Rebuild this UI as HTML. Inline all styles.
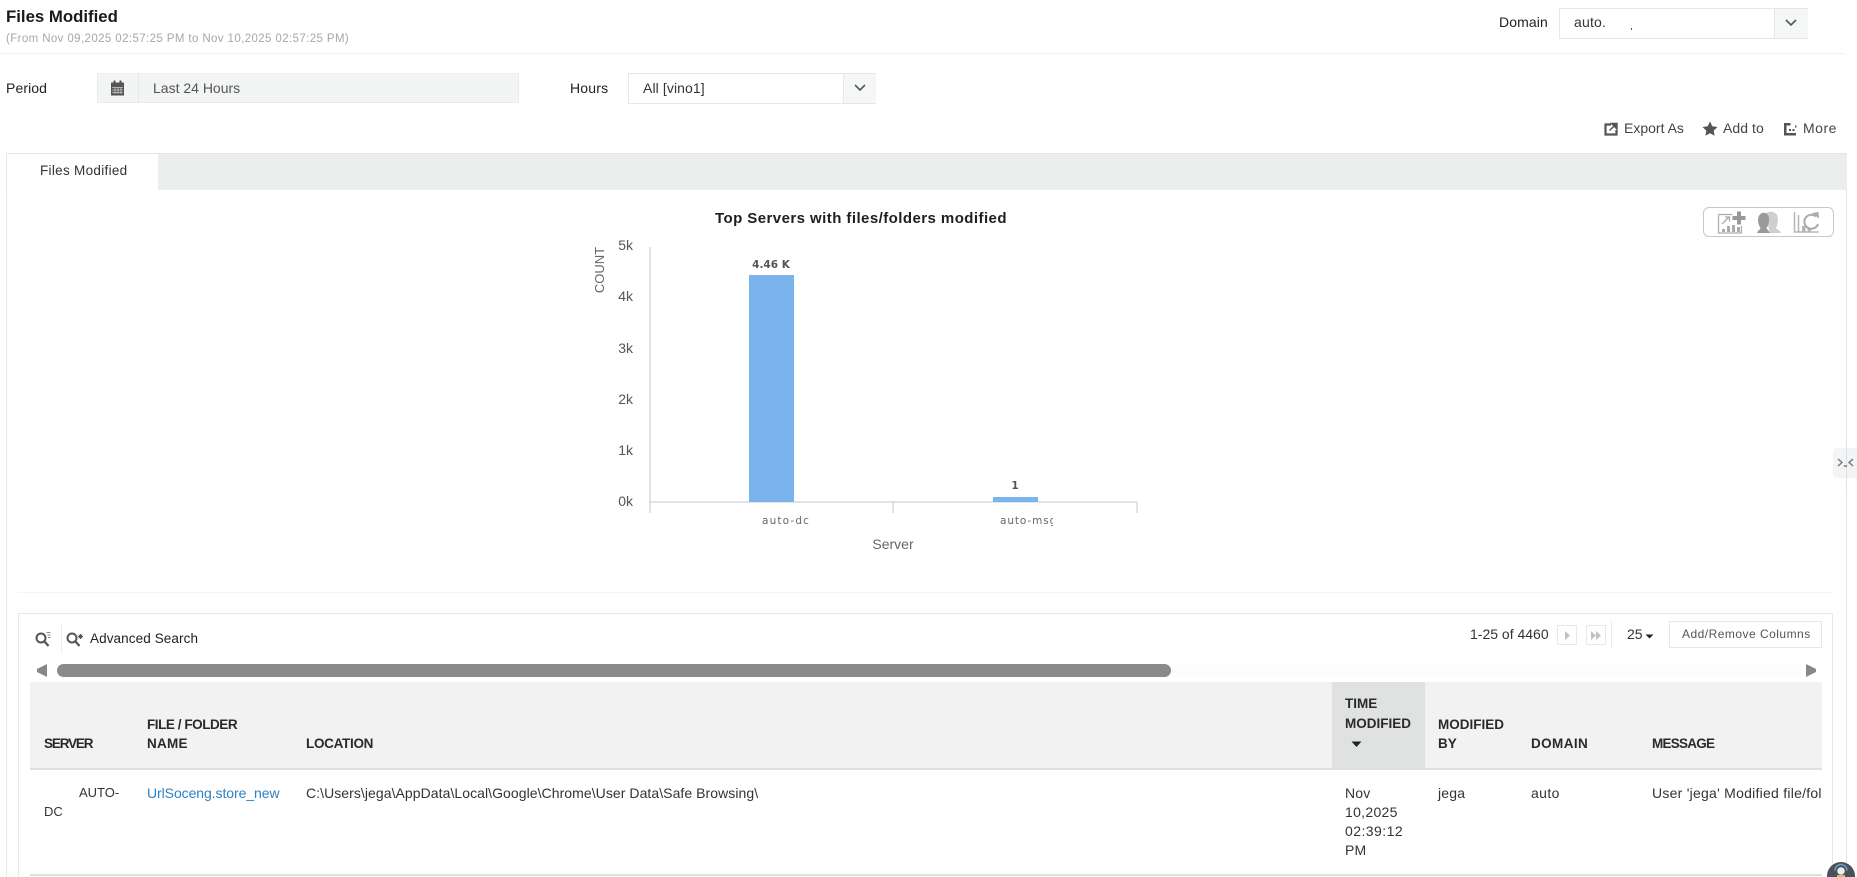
<!DOCTYPE html>
<html lang="en"><head><meta charset="utf-8"><title>Files Modified</title>
<style>
html,body{margin:0;padding:0;background:#fff}
body{width:1857px;height:877px;overflow:hidden;position:relative;font-family:"Liberation Sans",sans-serif;font-size:14px;color:#222}
.a{position:absolute}
.t{position:absolute;white-space:nowrap;line-height:20px;height:20px}
.h{font-weight:bold;font-size:13.5px;color:#2a2a2a;letter-spacing:0}
svg{position:absolute;display:block}
</style></head><body>

<div class="t" style="left:6px;top:7px;font-size:16.8px;font-weight:bold;color:#1a1a1a">Files Modified</div>
<div class="t" style="left:6px;top:29px;font-size:11.5px;color:#a3a9a9;letter-spacing:.39px">(From Nov 09,2025 02:57:25 PM to Nov 10,2025 02:57:25 PM)</div>
<div class="a" style="left:0;top:53px;width:1845px;height:1px;background:#f1f1f1"></div>

<div class="t" style="left:1499px;top:12px;color:#222;letter-spacing:.1px">Domain</div>
<div class="a" style="left:1559px;top:8px;width:247px;height:29px;border:1px solid #e6e8e8;box-sizing:content-box"></div>
<div class="a" style="left:1774px;top:9px;width:33px;height:29px;background:#f5f6f6;border-left:1px solid #e6e8e8"></div>
<div class="t" style="left:1574px;top:12px;color:#333;letter-spacing:.2px">auto.</div>
<div class="a" style="left:1631px;top:28px;width:1px;height:2px;background:#555"></div>
<svg style="left:1784px;top:18px" width="14" height="10"><path d="M2 2l5 5 5-5" fill="none" stroke="#555" stroke-width="1.6"/></svg>

<div class="t" style="left:6px;top:78px;color:#222;letter-spacing:.1px">Period</div>
<div class="a" style="left:97px;top:73px;width:422px;height:30px;background:#f3f4f4;border:1px solid #e8eaea;border-top-color:#eceeee;box-sizing:border-box"></div>
<div class="a" style="left:138px;top:74px;width:1px;height:28px;background:#e6e8e8"></div>
<svg style="left:110px;top:80px" width="15" height="16"><rect x="1" y="2.5" width="13" height="13" fill="#555"/><rect x="3.5" y="0.5" width="2" height="4" fill="#555"/><rect x="9.5" y="0.5" width="2" height="4" fill="#555"/><path d="M2 7.5h11M2 10h11M2 12.5h11M5 7v7M8 7v7M11 7v7" stroke="#c9c9c9" stroke-width=".8"/></svg>
<div class="t" style="left:153px;top:78px;color:#555;letter-spacing:0">Last 24 Hours</div>

<div class="t" style="left:570px;top:78px;color:#222;letter-spacing:.2px">Hours</div>
<div class="a" style="left:628px;top:73px;width:248px;height:31px;border:1px solid #e6e8e8;box-sizing:border-box"></div>
<div class="a" style="left:843px;top:74px;width:32px;height:29px;background:#f5f6f6;border-left:1px solid #e6e8e8"></div>
<div class="t" style="left:643px;top:78px;color:#333;letter-spacing:.1px">All [vino1]</div>
<svg style="left:853px;top:83px" width="14" height="10"><path d="M2 2l5 5 5-5" fill="none" stroke="#555" stroke-width="1.6"/></svg>

<svg style="left:1604px;top:122px" width="14" height="14"><path d="M7 2.500H1.500v10h11V8" fill="none" stroke="#555" stroke-width="2.200"/><path d="M5.500 8.500L11 3.200M7.500 1.500h5.500v5.500z" fill="#555" stroke="#555" stroke-width="1.400"/></svg>
<div class="t" style="left:1624px;top:118px;color:#444;letter-spacing:0">Export As</div>
<svg style="left:1702px;top:121px" width="16" height="15"><path d="M8 .5l2.300 4.800 5.200.7-3.800 3.600.9 5.200L8 12.300l-4.600 2.500.9-5.200L.5 6l5.200-.7z" fill="#555"/></svg>
<div class="t" style="left:1723px;top:118px;color:#444;letter-spacing:.05px">Add to</div>
<svg style="left:1783px;top:122px" width="14" height="14"><path d="M1 1h6.500v2.500H3.500v7.500H13v2.500H1z" fill="#555"/><path d="M6 7h2v2H6zM9.500 7h2v2h-2zM12 3.500h1.500v2H12z" fill="#555"/></svg>
<div class="t" style="left:1803px;top:118px;color:#444;letter-spacing:.5px">More</div>

<!-- panel -->
<div class="a" style="left:6px;top:153px;width:1841px;height:724px;border-left:1px solid #e8e8e8;border-right:1px solid #e4e6e6;box-sizing:border-box"></div>
<div class="a" style="left:6px;top:153px;width:1841px;height:37px;background:#eceeee;border-top:1px solid #e4e6e6;box-sizing:border-box"></div>
<div class="a" style="left:6px;top:153px;width:152px;height:38px;background:#fff;border-top:1px solid #e4e6e6;border-left:1px solid #e4e6e6;box-sizing:border-box"></div>
<div class="t" style="left:40px;top:161px;color:#333;font-size:13.5px;letter-spacing:.3px">Files Modified</div>

<!-- chart tools -->
<div class="a" style="left:1703px;top:207px;width:131px;height:30px;border:1px solid #c8c8c8;border-radius:6px;box-sizing:border-box"></div>
<svg style="left:1715px;top:210px" width="110" height="25">
<g transform="translate(2 1)">
<g fill="none" stroke="#aaa"><path d="M1.500 3.500h14M1.500 3.500v18.500h23V15" stroke-width="1.200"/><path d="M5 13l7-7M8 6h4.500v4.500" stroke-width="1.300"/></g>
<path d="M5 18h3v3H5zM10 15h3v6h-3zM15 14h3v7h-3zM20 16h3v5h-3z" fill="#aaa"/>
<path d="M20 .5h4v4.500h4.500v4H24v4.500h-4V9h-4.500V5H20z" fill="#999"/>
</g>
<g transform="translate(1 0)">
<path d="M49 4c4-4 13-3 13 5 0 4-1 7-2 9 0 1 4 2 5 5H54z" fill="#cfcfcf"/>
<path d="M46 3c4-1 8 2 7 8-.5 3-1 5-2.500 7 0 1.500 3 2.500 3.500 5H41c.5-2.500 3.500-3.500 3.500-5C43 16 42 13 42 10c0-3 1.500-6 4-7z" fill="#9a9a9a"/>
</g>
<g transform="translate(-11 0)">
<path d="M90.500 2v20h24" fill="none" stroke="#b5b5b5" stroke-width="1.500"/>
<path d="M94.500 5v17" stroke="#b5b5b5" stroke-width="1.500"/>
<path d="M98 16h3.500v6H98zM103.500 18.500h3.500V22h-3.500z" fill="#b5b5b5"/>
<path d="M112 6.500a7 7 0 1 0 2 7.500" fill="none" stroke="#aaa" stroke-width="2"/>
<path d="M108 3l6.500-1 .5 6.500z" fill="#aaa"/>
</g>
</svg>

<!-- chart -->
<div class="t" style="left:715px;top:209px;font-size:15px;font-weight:bold;color:#1f1f1f;letter-spacing:.44px">Top Servers with files/folders modified</div>
<svg style="left:580px;top:230px" width="600" height="330">
<g fill="none" stroke="#d7dbdd" stroke-width="1.500"><path d="M70 17v266M70 272h487M313 272v11M557 272v11"/></g>
<rect x="169" y="45" width="45" height="227" fill="#7bb4ec"/>
<rect x="413" y="267" width="45" height="5" fill="#7bb4ec"/>
<g font-family="Liberation Sans, sans-serif" font-size="14" fill="#555" text-anchor="end">
<text x="53" y="20">5k</text><text x="53" y="71">4k</text><text x="53" y="123">3k</text><text x="53" y="174">2k</text><text x="53" y="225">1k</text><text x="53" y="276">0k</text></g>
<text transform="translate(24 40) rotate(-90)" text-anchor="middle" font-family="Liberation Sans, sans-serif" font-size="13" fill="#666">COUNT</text>
<text x="191" y="38" text-anchor="middle" font-family="DejaVu Sans, sans-serif" font-size="10.500" font-weight="bold" fill="#555">4.46 K</text>
<text x="435" y="259" text-anchor="middle" font-family="DejaVu Sans, sans-serif" font-size="10.500" font-weight="bold" fill="#555">1</text>
<text x="182" y="294" font-family="DejaVu Sans, sans-serif" font-size="10.500" letter-spacing="1.150" fill="#666">auto-dc</text>
<svg x="420" y="280" width="53" height="20"><text x="0" y="14" font-family="DejaVu Sans, sans-serif" font-size="10.500" letter-spacing=".9" fill="#666">auto-msg</text></svg>
<text x="313" y="319" text-anchor="middle" font-family="Liberation Sans, sans-serif" font-size="14" fill="#666">Server</text>
</svg>
<div class="a" style="left:18px;top:592px;width:1815px;height:1px;background:#f4f4f4"></div>

<!-- right widget -->
<div class="a" style="left:1833px;top:448px;width:24px;height:30px;background:#f3f4f5;border-radius:4px 0 0 4px"></div>
<div class="a" style="left:1846px;top:440px;width:1px;height:50px;background:#dfe1e1"></div>
<svg style="left:1836px;top:456px" width="20" height="14"><path d="M2 3l4 3.500L2 10M17 3l-4 3.500L17 10M8 9.500q1.500 1.500 3 0" fill="none" stroke="#777" stroke-width="1.400"/></svg>

<!-- table card -->
<div class="a" style="left:18px;top:613px;width:1815px;height:264px;border:1px solid #e8e8e8;border-bottom:0;box-sizing:border-box"></div>
<svg style="left:34px;top:630px" width="52" height="20">
<circle cx="7" cy="8" r="4.500" fill="none" stroke="#555" stroke-width="2"/><path d="M10 11l4.500 5" stroke="#555" stroke-width="2.200"/><path d="M12.500 2.500h4M13.500 5h3M14 7.500h2.500" stroke="#888" stroke-width="1"/>
<circle cx="38" cy="8" r="4.500" fill="none" stroke="#555" stroke-width="2"/><path d="M41 11l4.500 5" stroke="#555" stroke-width="2.200"/><path d="M46.500 4v5M44 6.500h5M44.700 4.700l3.600 3.600M48.300 4.700l-3.600 3.600" stroke="#555" stroke-width="1"/>
</svg>
<div class="a" style="left:61px;top:623px;width:1px;height:31px;background:#eceeee"></div>
<div class="t" style="left:90px;top:629px;color:#222;font-size:13.5px;letter-spacing:.1px">Advanced Search</div>

<div class="t" style="left:1470px;top:624px;color:#333;letter-spacing:0">1-25 of 4460</div>
<div class="a" style="left:1557px;top:625px;width:20px;height:20px;border:1px solid #e8e8e8;box-sizing:border-box"></div>
<svg style="left:1564px;top:630px" width="8" height="11"><path d="M1 1l5 4.500L1 10z" fill="#c2c2c2"/></svg>
<div class="a" style="left:1586px;top:625px;width:20px;height:20px;border:1px solid #e8e8e8;box-sizing:border-box"></div>
<svg style="left:1590px;top:630px" width="13" height="11"><path d="M1 1l5 4.500L1 10zM6 1l5 4.500L6 10z" fill="#c2c2c2"/></svg>
<div class="a" style="left:1611px;top:620px;width:1px;height:28px;background:#eceeee"></div>
<div class="t" style="left:1627px;top:624px;color:#333">25</div>
<svg style="left:1645px;top:634px" width="9" height="5"><path d="M.5 .5h8L4.500 4.500z" fill="#222"/></svg>
<div class="a" style="left:1669px;top:621px;width:153px;height:27px;border:1px solid #e6e8e8;box-sizing:border-box"></div>
<div class="t" style="left:1682px;top:624px;font-size:12px;color:#555;letter-spacing:.48px">Add/Remove Columns</div>

<!-- scrollbar -->
<svg style="left:36px;top:663px" width="12" height="15"><path d="M11 1v13L1 9V6z" fill="#888"/></svg>
<div class="a" style="left:57px;top:664px;width:1114px;height:13px;background:#8a8a8a;border-radius:7px"></div>
<div class="a" style="left:1171px;top:664px;width:630px;height:13px;background:#fcfdfd"></div>
<svg style="left:1805px;top:663px" width="12" height="15"><path d="M1 1v13l10-5V6z" fill="#888"/></svg>

<!-- table -->
<div class="a" style="left:30px;top:682px;width:1792px;height:86px;background:#f2f2f2"></div>
<div class="a" style="left:1332px;top:682px;width:93px;height:86px;background:#e0e2e2"></div>
<div class="a" style="left:30px;top:768px;width:1792px;height:2px;background:#dfe1e1"></div>
<div class="t h" style="left:44px;top:734px;letter-spacing:-1.15px">SERVER</div>
<div class="t h" style="left:147px;top:715px;letter-spacing:-.45px">FILE / FOLDER</div>
<div class="t h" style="left:147px;top:734px;letter-spacing:.25px">NAME</div>
<div class="t h" style="left:306px;top:734px;letter-spacing:-.3px">LOCATION</div>
<div class="t h" style="left:1345px;top:694px">TIME</div>
<div class="t h" style="left:1345px;top:714px;letter-spacing:0">MODIFIED</div>
<svg style="left:1351px;top:741px" width="11" height="7"><path d="M.5 .5h10L5.500 6z" fill="#222"/></svg>
<div class="t h" style="left:1438px;top:715px;letter-spacing:0">MODIFIED</div>
<div class="t h" style="left:1438px;top:734px">BY</div>
<div class="t h" style="left:1531px;top:734px;letter-spacing:.4px">DOMAIN</div>
<div class="t h" style="left:1652px;top:734px;letter-spacing:-.75px">MESSAGE</div>

<div class="t" style="left:79px;top:783px;color:#333;font-size:13px">AUTO-</div>
<div class="t" style="left:44px;top:802px;color:#333;font-size:13px">DC</div>
<div class="t" style="left:147px;top:783px;color:#2b81c4;letter-spacing:-.07px">UrlSoceng.store_new</div>
<div class="t" style="left:306px;top:783px;color:#333;letter-spacing:.06px">C:\Users\jega\AppData\Local\Google\Chrome\User Data\Safe Browsing\</div>
<div class="t" style="left:1345px;top:783px;color:#333;letter-spacing:.2px">Nov</div>
<div class="t" style="left:1345px;top:802px;color:#333;letter-spacing:.3px">10,2025</div>
<div class="t" style="left:1345px;top:821px;color:#333;letter-spacing:.45px">02:39:12</div>
<div class="t" style="left:1345px;top:840px;color:#333;letter-spacing:.2px">PM</div>
<div class="t" style="left:1438px;top:783px;color:#333;letter-spacing:.2px">jega</div>
<div class="t" style="left:1531px;top:783px;color:#333;letter-spacing:.4px">auto</div>
<div class="a" style="left:1652px;top:783px;width:170px;height:20px;overflow:hidden"><div class="t" style="left:0;top:0;color:#333;letter-spacing:.25px">User 'jega' Modified file/folder</div></div>
<div class="a" style="left:30px;top:874px;width:1792px;height:2px;background:#dfe1e1"></div>

<!-- help bubble -->
<svg style="left:1825px;top:858px" width="32" height="19"><circle cx="16" cy="18" r="14" fill="#4a5157"/><circle cx="16" cy="13" r="3.800" fill="#e8eef2"/><path d="M10 12.500a6 6 0 0 1 12 0" fill="none" stroke="#6d9fc6" stroke-width="1.500"/><rect x="12" y="17" width="8" height="2" fill="#e0b860"/></svg>
</body></html>
